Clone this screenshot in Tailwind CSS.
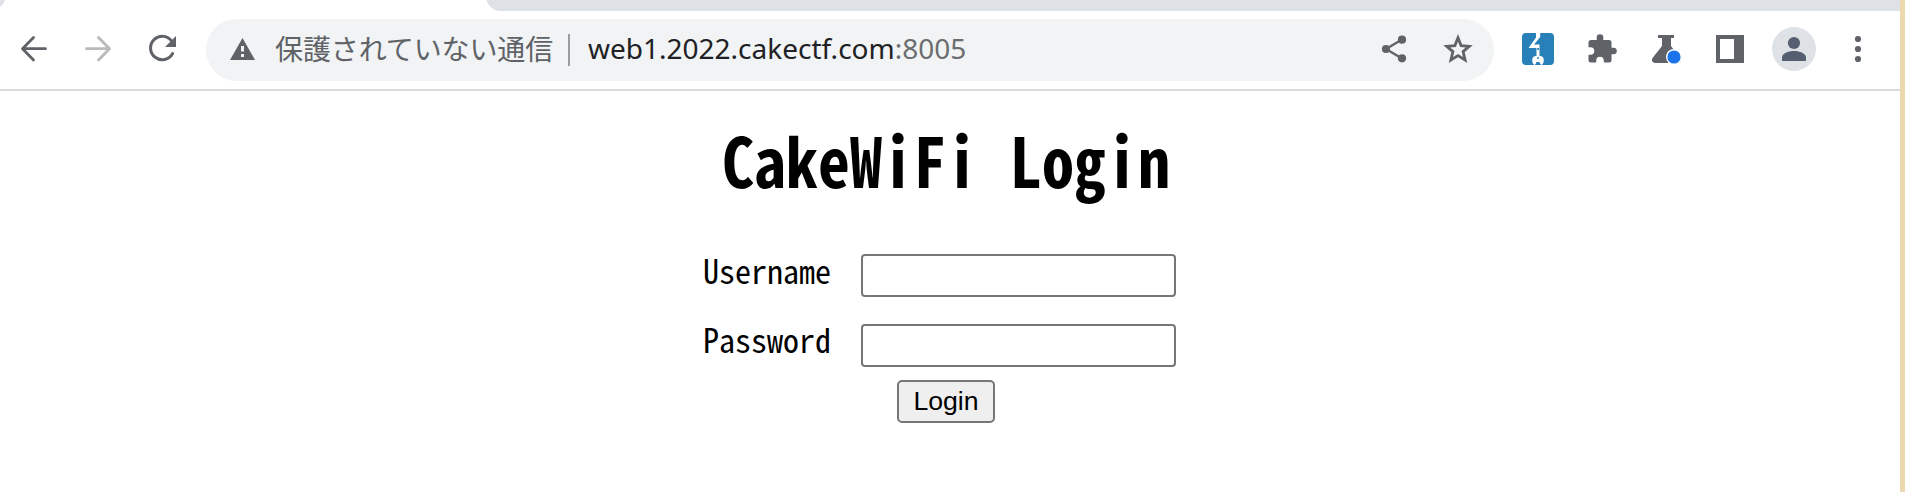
<!DOCTYPE html>
<html lang="ja">
<head>
<meta charset="utf-8">
<title>CakeWiFi Login</title>
<script src="https://cdn.jsdelivr.net/npm/@tailwindcss/browser@4"></script>
</head>
<body class="flex h-[492px] w-[1905px] overflow-hidden bg-white">
<div class="flex w-[1900px] flex-col">
  <!-- tab strip -->
  <div class="flex h-[11px] bg-[#dee1e6]">
    <svg class="h-[11px] w-[500px]" viewBox="0 0 500 11"><path fill="#fff" d="M0 7Q4 4 5 0H486.5C488 6 494 11 500 11H0Z"/></svg>
  </div>
  <!-- toolbar -->
  <header class="flex h-[80px] border-b-2 border-[#dadbdc]">
    <svg class="h-[78px] w-[64px]" viewBox="0 11 64 78" fill="none" stroke="#5f6368" stroke-width="2.8"><path stroke-linecap="round" stroke-linejoin="round" d="M45.5 48.7H23M33.5 37.5L22.5 48.7L33.5 60"/></svg>
    <svg class="h-[78px] w-[64px]" viewBox="64 11 64 78" fill="none" stroke="#bababb" stroke-width="2.8"><path stroke-linecap="round" stroke-linejoin="round" d="M86.5 48.7H109M98.500 37.500L109.500 48.700L98.500 60"/></svg>
    <svg class="h-[78px] w-[78px]" viewBox="128 11 78 78"><path fill="none" stroke="#5f6368" stroke-width="3" stroke-linecap="round" d="M172 41.500A11.700 11.700 0 1 0 172.600 53.500"/><path fill="#5f6368" d="M176 36V47H165Z"/></svg>
    <div class="mt-2 flex h-[62px] w-[1288px] items-center rounded-full bg-[#f1f3f4]">
      <svg class="h-[62px] w-[69px] shrink-0" viewBox="206 19 69 62"><path fill="#5f6368" d="M242.500 38L255 60H230Z"/><path fill="#f1f3f4" d="M241 46H244V51.500H241ZM241 54H244V57H241Z"/></svg>
      <span class="-mt-[3px] w-[293px] shrink-0 whitespace-nowrap font-['Noto_Sans_CJK_JP',sans-serif] text-[28px] leading-[59px] tracking-[-0.1px] text-[#5f6368]">保護されていない通信</span>
      <span class="h-8 w-[2px] shrink-0 bg-[#9b9c9f]"></span>
      <span class="-mt-[3px] ml-[18px] whitespace-nowrap font-['Noto_Sans',sans-serif] text-[28px] leading-[59px] text-[#202124]">web1.2022.cakectf.com<span class="text-[#6b6e71]">:8005</span></span>
      <svg class="ml-auto h-[62px] w-[134px] shrink-0" viewBox="1360 19 134 62"><path fill="none" stroke="#5f6368" stroke-width="2.3" d="M1402 39.500L1386 49L1402 58.500"/><g fill="#5f6368"><circle cx="1386" cy="49" r="4.100"/><circle cx="1402" cy="39.700" r="4.100"/><circle cx="1402" cy="58.300" r="4.100"/></g><path fill="none" stroke="#5f6368" stroke-width="2.800" d="M1458 37.800L1461.100 45.600L1469.300 46.300L1463.100 51.600L1465.100 60L1458 55.600L1450.900 60L1452.900 51.600L1446.700 46.300L1454.900 45.600Z"/></svg>
    </div>
    <svg class="h-[78px] w-[76px]" viewBox="1494 11 76 78"><rect x="1522" y="33" width="32" height="32" rx="4" fill="#2880b9"/><path fill="#fff" d="M1536 33H1540.200V37L1534 44.500H1539.500V57H1536.500V48H1528.500L1536 37.500Z"/><path fill="#2880b9" d="M1537.300 48H1539V50H1537.300Z"/><path fill="none" stroke="#fff" stroke-width="3" d="M1535.500 64C1532.500 61.500 1533.500 57.500 1535.800 57.500V60.500H1540.200V57.500C1542.500 57.500 1543.500 61.500 1540.500 64"/></svg>
    <svg class="h-[78px] w-[64px]" viewBox="1570 11 64 78"><path fill="#5f6368" d="M1591 40H1596.700V37.500A3.300 3.300 0 0 1 1603.300 37.500V40H1609Q1611.500 40 1611.500 42.500V47.700H1613.500A3.300 3.300 0 0 1 1613.500 54.300H1611.500V60Q1611.500 62.500 1609 62.500H1603.800V60.500A3.800 3.800 0 0 0 1596.200 60.500V62.500H1591Q1588.500 62.500 1588.500 60V54.800H1590.500A3.800 3.800 0 0 0 1590.500 47.200H1588.500V42.500Q1588.500 40 1591 40Z"/></svg>
    <svg class="h-[78px] w-[64px]" viewBox="1634 11 64 78"><path fill="#5f6368" d="M1658 35H1674V38H1671V46L1680 58Q1682 63 1677.500 63H1655Q1650.500 62 1652.500 58L1662 46V38H1658Z"/><circle cx="1674" cy="57" r="8" fill="#fff"/><circle cx="1674" cy="57" r="6.600" fill="#1a73e8"/></svg>
    <svg class="h-[78px] w-[64px]" viewBox="1698 11 64 78"><path fill="#5f6368" fill-rule="evenodd" d="M1716 35H1744V63H1716ZM1720 39V59H1734V39Z"/></svg>
    <svg class="h-[78px] w-[64px]" viewBox="1762 11 64 78"><circle cx="1794" cy="49" r="22" fill="#dee1e6"/><g fill="#565f71"><circle cx="1794" cy="43" r="6.100"/><path d="M1782 61V57.500C1782 53.500 1788 51 1794 51S1806 53.500 1806 57.500V61Z"/></g></svg>
    <svg class="h-[78px] w-[74px]" viewBox="1826 11 74 78" fill="#5f6368"><circle cx="1858" cy="39" r="3.100"/><circle cx="1858" cy="49" r="3.100"/><circle cx="1858" cy="59" r="3.100"/></svg>
  </header>
  <!-- login page -->
  <main class="text-black">
    <h1 class="ml-[722px] mt-[31px] h-[72px] w-[460px] origin-center scale-y-[1.07] whitespace-pre font-['Noto_Sans_Mono_CJK_JP',monospace] text-[64px] font-bold leading-[72px]">CakeWiFi Login</h1>
    <form class="ml-[703px] mt-[60px] w-[473px]">
      <div class="flex h-[70px]">
        <label for="u" class="-mt-[5px] block h-[40px] w-[158px] scale-y-[1.05] font-['Noto_Sans_Mono_CJK_JP',monospace] text-[32px] leading-[40px]">Username</label>
        <input id="u" type="text" class="h-[43px] w-[315px] rounded-[4px] border-2 border-[#767676] bg-white">
      </div>
      <div class="flex h-[56px]">
        <label for="p" class="-mt-[6px] block h-[40px] w-[158px] scale-y-[1.05] font-['Noto_Sans_Mono_CJK_JP',monospace] text-[32px] leading-[40px]">Password</label>
        <input id="p" type="password" class="h-[43px] w-[315px] rounded-[4px] border-2 border-[#767676] bg-white">
      </div>
      <button type="button" class="ml-[194px] flex h-[43px] w-[98px] justify-center rounded-[5px] border-2 border-[#767676] bg-[#efefef] font-['Liberation_Sans',sans-serif] text-[26.670px] leading-[38px]">Login</button>
    </form>
  </main>
</div>
<div class="w-[5px] bg-[#ecd9ad]"></div>
</body>
</html>
